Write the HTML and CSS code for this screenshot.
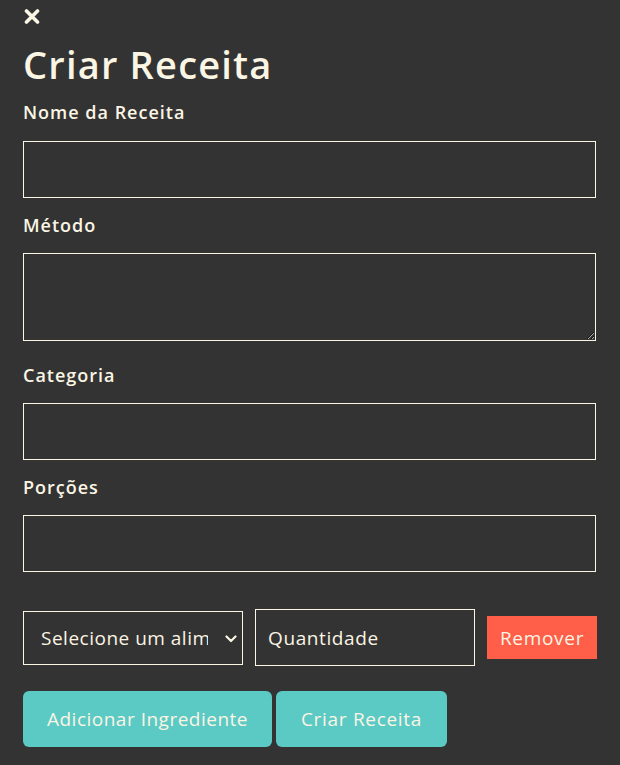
FILE: index.html
```html
<!DOCTYPE html>
<html lang="pt">
<head>
<meta charset="utf-8">
<title>Criar Receita</title>
<link rel="stylesheet" href="styles.css">
</head>
<body>
<div class="modal">
  <button class="close" aria-label="Fechar">
    <svg width="16" height="15" viewBox="0 0 16 15"><path d="M2.5 2 L13.5 13 M13.5 2 L2.5 13" stroke="#fbf5e4" stroke-width="3.6" stroke-linecap="round"/></svg>
  </button>
  <h1 class="title">Criar Receita</h1>
  <form class="form">
    <label class="label label-first">Nome da Receita</label>
    <input class="field" type="text">
    <label class="label">Método</label>
    <textarea class="field area"></textarea>
    <label class="label">Categoria</label>
    <input class="field" type="text">
    <label class="label">Porções</label>
    <input class="field" type="text">
    <div class="ingredient-row">
      <div class="select-wrap">
        <select class="select"><option>Selecione um alimento</option></select>
        <svg class="chev" width="12" height="8" viewBox="0 0 12 8"><path d="M1.5 1.5 L6 6 L10.5 1.5" fill="none" stroke="#fbf5e4" stroke-width="2.2" stroke-linecap="round" stroke-linejoin="round"/></svg>
      </div>
      <input class="qty" type="text" placeholder="Quantidade">
      <button type="button" class="remove">Remover</button>
    </div>
    <div class="actions">
      <button type="button" class="btn btn-add">Adicionar Ingrediente</button>
      <button type="button" class="btn btn-create">Criar Receita</button>
    </div>
  </form>
</div>
</body>
</html>
```
FILE: styles.css
```css
html, body {
  margin: 0;
  padding: 0;
  background: #333333;
}
body {
  font-family: "Open Sans", Lato, sans-serif;
  color: #fbf5e4;
}
.modal {
  padding: 8px 0 0 23px;
  width: 574px;
}
.close {
  display: block;
  width: 16px;
  height: 16px;
  padding: 0;
  margin: 0 0 0 1px;
  border: 0;
  background: none;
}
.close svg { display: block; }
.title {
  margin: 17px 0 14px;
  font-size: 38px;
  line-height: 46px;
  font-weight: 600;
  letter-spacing: 1.2px;
}
.form {
  display: flex;
  flex-direction: column;
  align-items: flex-start;
}
.label {
  display: block;
  font-size: 18px;
  line-height: 22px;
  font-weight: 600;
  letter-spacing: 1px;
  margin-bottom: 17px;
}
.label-first { margin-bottom: 18px; }
.field {
  display: block;
  box-sizing: border-box;
  width: 573px;
  height: 57px;
  margin: 0 0 16px;
  background: transparent;
  border: 1px solid #fbf5e4;
  color: #fbf5e4;
  font-family: inherit;
  font-size: 19px;
  padding: 0 12px;
}
.area {
  height: 88px;
  margin-bottom: 23px;
  resize: vertical;
}
.ingredient-row {
  display: flex;
  align-items: center;
  gap: 12px;
  margin-top: 21px;
  height: 57px;
}
.select-wrap {
  position: relative;
}
.select {
  display: block;
  box-sizing: border-box;
  width: 220px;
  height: 54px;
  -webkit-appearance: none;
  appearance: none;
  background: #333333;
  border: 1px solid #fbf5e4;
  border-radius: 0;
  color: #fbf5e4;
  font-family: inherit;
  font-size: 19px;
  letter-spacing: 0.5px;
  padding: 0 34px 0 17px;
}
.chev {
  position: absolute;
  right: 6px;
  top: 24px;
  pointer-events: none;
}
.qty {
  box-sizing: border-box;
  width: 220px;
  height: 57px;
  background: transparent;
  border: 1px solid #fbf5e4;
  color: #fbf5e4;
  font-family: inherit;
  font-size: 19px;
  letter-spacing: 0.6px;
  padding: 0 12px;
}
.qty::placeholder { color: #fbf5e4; opacity: 1; }
.remove {
  box-sizing: border-box;
  width: 110px;
  height: 43px;
  border: 0;
  background: #ff5e48;
  color: #fbf5e4;
  font-family: inherit;
  font-size: 19px;
  letter-spacing: 0.7px;
  padding: 0;
}
.actions {
  display: flex;
  gap: 4px;
  margin-top: 25px;
}
.btn {
  box-sizing: border-box;
  height: 56px;
  border: 0;
  border-radius: 6px;
  background: #5bc9c4;
  color: #fbf5e4;
  font-family: inherit;
  font-size: 19px;
  letter-spacing: 0.5px;
  padding: 0;
}
.btn-add { width: 249px; }
.btn-create { width: 171px; letter-spacing: 0.7px; }
```
